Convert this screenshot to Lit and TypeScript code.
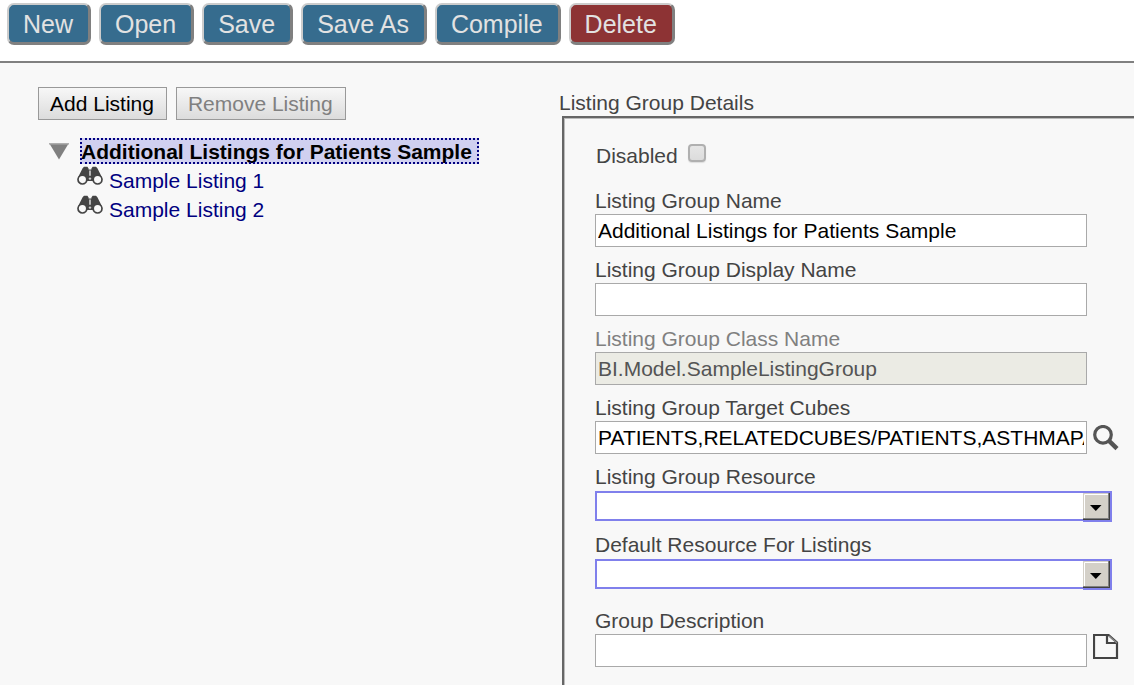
import { LitElement, html, css, svg } from "lit";
import { customElement, property } from "lit/decorators.js";

const binoculars = html`<svg class="binoculars" viewBox="0 0 26 20" aria-hidden="true">
  ${svg`
  <path d="M5.6 2.2L7 .8H10.4L11.6 2.4V3.4H14.4V2.4L15.6 .8H19L20.4 2.2L24.8 11L20 15H6L1.2 11Z" fill="#444"/>
  <path d="M12.3 4.6H13.7V9.8H12.3Z" fill="#e8e8e8"/>
  <circle cx="5.4" cy="13.6" r="4.4" fill="#f8f8f8" stroke="#444" stroke-width="1.7"/>
  <circle cx="20.6" cy="13.6" r="4.4" fill="#f8f8f8" stroke="#444" stroke-width="1.7"/>
  <circle cx="13" cy="12.6" r="1.2" fill="#ccc"/>`}
</svg>`;

@customElement("action-toolbar")
class ActionToolbar extends LitElement {
  static styles = css`
    :host { display: block; }
    .bar {
      display: flex;
      gap: 8px;
      padding: 3px 7px 16px;
      background: #fff;
      border-bottom: 2px solid #808080;
    }
    .action {
      height: 42px;
      padding: 0 15px 0 14px;
      border: 2px solid #ccc;
      border-right: 3px solid #808080;
      border-bottom: 3px solid #808080;
      border-radius: 7px;
      background: #366c8e;
      color: #e2e2e2;
      font: 25px/30px "Liberation Sans", Arial, sans-serif;
      white-space: nowrap;
    }
    .danger { background: #8d3334; }
  `;
  render() {
    return html`<div class="bar" role="toolbar">
      ${["New", "Open", "Save", "Save As", "Compile"].map(
        (t) => html`<button class="action">${t}</button>`
      )}
      <button class="action danger">Delete</button>
    </div>`;
  }
}

@customElement("listing-tree")
class ListingTree extends LitElement {
  @property({ attribute: false }) listings = ["Sample Listing 1", "Sample Listing 2"];
  static styles = css`
    :host { display: block; }
    .buttons { display: flex; gap: 9px; }
    .btn {
      height: 33px;
      padding: 0 12px 0 11px;
      border: 1px solid #999;
      background: linear-gradient(#f7f7f7, #dcdcdc);
      color: #000;
      font: inherit;
      white-space: nowrap;
    }
    .btn:disabled { color: #808080; }
    .tree { list-style: none; margin: 0; padding: 18px 0 0 11px; }
    .group { display: flex; align-items: center; gap: 11px; }
    .toggle { display: flex; padding: 0; border: 0; background: none; }
    .triangle { width: 20px; height: 17px; }
    .link { color: #000080; text-decoration: none; white-space: nowrap; }
    .selected {
      padding: 2px 7px 0 1px;
      line-height: 24px;
      font-weight: bold;
      color: #000;
      background: #d0d0f0;
      outline: 2px dotted #000080;
      outline-offset: -2px;
    }
    .children { list-style: none; margin: 0; padding: 2px 0 0 28px; }
    .item { display: flex; gap: 6px; height: 29px; line-height: 29px; }
    .binoculars { width: 26px; height: 20px; }
  `;
  render() {
    return html`
      <div class="buttons">
        <button class="btn">Add Listing</button>
        <button class="btn" disabled>Remove Listing</button>
      </div>
      <ul class="tree">
        <li>
          <div class="group">
            <button class="toggle" aria-label="Collapse" aria-expanded="true">
              <svg class="triangle" viewBox="0 0 20 17">
                <path d="M.7 1H19.3L10 16.5Z" fill="#808080" />
                <path d="M0 .8H20" stroke="#aaa" stroke-width="1.5" />
              </svg>
            </button>
            <a class="link selected" href="#">Additional Listings for Patients Sample</a>
          </div>
          <ul class="children">
            ${this.listings.map(
              (t) => html`<li class="item">${binoculars}<a class="link" href="#">${t}</a></li>`
            )}
          </ul>
        </li>
      </ul>
    `;
  }
}

@customElement("group-details")
class GroupDetails extends LitElement {
  static styles = css`
    :host { display: block; color: #444; }
    .title { margin: 0; font: inherit; line-height: 26px; }
    .panel {
      margin-left: 3px;
      padding: 24px 16px 18px 31px;
      border: solid #666;
      border-width: 2px 0 0 2px;
      box-shadow: inset 1px 1px #bbb;
    }
    .disabled-row { display: flex; align-items: flex-start; gap: 10px; padding-left: 1px; line-height: 28px; }
    .check {
      appearance: none;
      width: 18px;
      height: 18px;
      margin: 2px 0;
      border: 2px solid #b0b0b0;
      border-radius: 4px;
      background: linear-gradient(#e6e6e6, #dcdcdc);
      box-shadow: 0 1px 1px #ddd;
    }
    .check:checked { background: #666; }
    .field { padding-top: 10px; }
    .spaced { padding-top: 18px; }
    .disabled-row + .field { padding-top: 18px; }
    .label { display: block; line-height: 26px; }
    .muted { color: #808080; }
    .row { display: grid; grid-template-columns: minmax(0, 1fr) 25px; column-gap: 6px; align-items: center; }
    .spaced .row { align-items: start; }
    .input {
      box-sizing: border-box;
      width: 100%;
      height: 33px;
      padding: 0 2px;
      border: 1px solid #a9a9a9;
      border-radius: 0;
      background: #fff;
      color: #000;
      font: inherit;
    }
    .input:disabled { background: #ebebe4; color: #545454; }
    .icon-button { display: flex; padding: 0; border: 0; background: none; }
    .icon { width: 26px; height: 26px; flex: none; }
    .combo { position: relative; height: 31px; margin: 1px 6px 0 0; }
    .select {
      appearance: none;
      display: block;
      width: 100%;
      height: 30px;
      padding: 0 31px 0 2px;
      border: 2px solid #8080ec;
      border-radius: 0;
      background: #fff;
      font: inherit;
    }
    .arrow {
      position: absolute;
      top: 0;
      right: 0;
      width: 29px;
      height: 31px;
      pointer-events: none;
    }
  `;
  private text(id: string, label: string, value = "", disabled = false, icon: unknown = null, cls = "") {
    return html`<div class="field ${cls}">
      <label class="label ${disabled ? "muted" : ""}" for=${id}>${label}</label>
      <div class="row">
        <input class="input" id=${id} type="text" .value=${value} ?disabled=${disabled} />${icon}
      </div>
    </div>`;
  }
  private combo(id: string, label: string) {
    return html`<div class="field">
      <label class="label" for=${id}>${label}</label>
      <div class="combo">
        <select class="select" id=${id}><option></option></select>
        <svg class="arrow" viewBox="0 0 29 31" aria-hidden="true">
          <path d="M0 0H29V31H0Z" fill="#8080ec" />
          <path d="M0 2H27V29H0Z" fill="#404040" />
          <path d="M0 2H26V28H0Z" fill="#808080" />
          <path d="M0 2H25V27H0Z" fill="#d4d0c8" />
          <path d="M1.5 27V3.5H25" fill="none" stroke="#fff" />
          <path d="M7 14H18.5L12.8 20Z" fill="#000" />
        </svg>
      </div>
    </div>`;
  }
  render() {
    const search = html`<button class="icon-button" aria-label="Search">
      <svg class="icon" viewBox="0 0 26 26">
        <circle cx="10" cy="9.8" r="8.3" fill="none" stroke="#555" stroke-width="3.2" />
        <path d="M15.8 15.6L24 23.6" stroke="#555" stroke-width="4.4" />
      </svg>
    </button>`;
    const page = html`<button class="icon-button" aria-label="Edit description">
      <svg class="icon" viewBox="0 0 26 26">
        <path d="M1 1H15.5L24 8.5V24H1Z" fill="#f8f8f8" stroke="#444" stroke-width="2.2" />
        <path d="M14 1V9H24" fill="none" stroke="#444" stroke-width="2.2" />
        <path d="M16 2L24 9" stroke="#888" stroke-width="1.4" />
      </svg>
    </button>`;
    return html`
      <h2 class="title">Listing Group Details</h2>
      <div class="panel">
        <div class="disabled-row">
          <label for="disabled">Disabled</label>
          <input class="check" id="disabled" type="checkbox" />
        </div>
        ${this.text("name", "Listing Group Name", "Additional Listings for Patients Sample")}
        ${this.text("display", "Listing Group Display Name")}
        ${this.text("class", "Listing Group Class Name", "BI.Model.SampleListingGroup", true)}
        ${this.text("cubes", "Listing Group Target Cubes", "PATIENTS,RELATEDCUBES/PATIENTS,ASTHMAPATIENTS", false, search)}
        ${this.combo("resource", "Listing Group Resource")}
        ${this.combo("default", "Default Resource For Listings")}
        ${this.text("description", "Group Description", "", false, page, "spaced")}
      </div>
    `;
  }
}

@customElement("app-root")
class AppRoot extends LitElement {
  static styles = css`
    :host {
      display: flex;
      flex-direction: column;
      min-height: 100vh;
      background: #f8f8f8;
      font: 21px/26px "Liberation Sans", Arial, sans-serif;
    }
    .workspace { flex: 1; display: grid; grid-template-columns: 559fr 575fr; }
    .left { min-width: 0; padding: 24px 38px; }
    .right { min-width: 0; padding-top: 27px; }
  `;
  render() {
    return html`
      <action-toolbar></action-toolbar>
      <main class="workspace">
        <listing-tree class="left"></listing-tree>
        <group-details class="right"></group-details>
      </main>
    `;
  }
}
